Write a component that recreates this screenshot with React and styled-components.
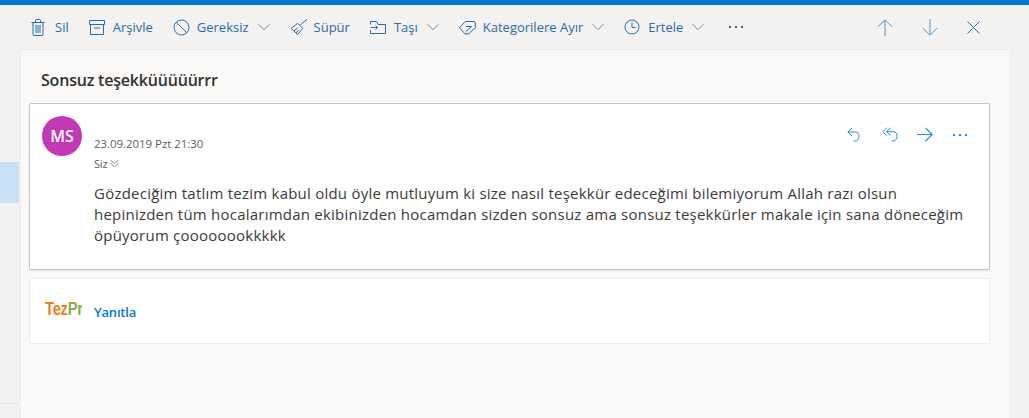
import React from 'react';
import styled, { createGlobalStyle } from 'styled-components';

const Global = createGlobalStyle`
  html, body { margin: 0; padding: 0; height: 100%; overflow: hidden; }
  body { font-family: "Open Sans", "Noto Sans", sans-serif; background: #f3f2f1; }
`;

const Page = styled.div`
  width: 1029px;
  height: 418px;
  display: flex;
  flex-direction: column;
  background: #f3f2f1;
`;

const TopStrip = styled.div`
  height: 5px;
  background: #0078d4;
  flex: none;
`;

const Toolbar = styled.div`
  height: 44px;
  flex: none;
  display: flex;
  align-items: center;
  gap: 20px;
  padding-left: 31px;
  color: #2b6ca3;
`;

const ToolItem = styled.div`
  display: flex;
  align-items: center;
  font-size: 13px;
  white-space: nowrap;
`;

const IconSlot = styled.span`
  width: 24px;
  display: flex;
  align-items: center;
`;

const ChevronSlot = styled.span`
  display: flex;
  margin-left: 9px;
`;

const MoreButton = styled.div`
  display: flex;
  margin-left: 4px;
`;

const Spacer = styled.div`
  flex: 1;
`;

const NavGroup = styled.div`
  display: flex;
  align-items: center;
  gap: 29px;
  padding-right: 49px;
`;

const Body = styled.div`
  flex: 1;
  display: flex;
`;

const LeftRail = styled.div`
  width: 19px;
  flex: none;
  border-right: 2px solid #f0efee;
  display: flex;
  flex-direction: column;
  padding-top: 113px;
`;

const SelectedRow = styled.div`
  height: 41px;
  background: #c7e0f4;
`;

const RailLine = styled.div`
  margin-top: 200px;
  height: 1px;
  background: #e6e5e3;
`;

const Pane = styled.div`
  width: 988px;
  flex: none;
  background: #faf9f8;
  border-top: 1px solid #edebe9;
  box-sizing: border-box;
  padding: 0 0 0 8px;
`;

const Subject = styled.h1`
  margin: 0;
  height: 53px;
  line-height: 60px;
  padding-left: 12px;
  font-size: 16px;
  font-weight: 600;
  color: #323130;
  letter-spacing: -0.2px;
`;

const MessageCard = styled.div`
  width: 961px;
  height: 167px;
  box-sizing: border-box;
  background: #fff;
  border: 1px solid #c8c6c4;
  border-radius: 2px;
  box-shadow: 0 1px 2px rgba(0, 0, 0, 0.08);
  display: grid;
  grid-template-columns: 52px 1fr auto;
  grid-template-rows: 70px 1fr;
  padding: 12px 0 0 12px;
`;

const Avatar = styled.div`
  width: 40px;
  height: 40px;
  border-radius: 50%;
  background: #c239b3;
  color: #fff;
  font-size: 16px;
  font-weight: 600;
  display: flex;
  align-items: center;
  justify-content: center;
`;

const Meta = styled.div`
  padding-top: 20px;
  color: #605e5c;
  font-size: 11.5px;
`;

const MetaDate = styled.div`
  height: 19px;
  line-height: 16px;
  letter-spacing: -0.05px;
`;

const Recipient = styled.div`
  display: flex;
  align-items: center;
  gap: 3px;
  height: 16px;
  font-size: 11px;
  letter-spacing: -0.2px;
`;

const Actions = styled.div`
  display: flex;
  align-items: center;
  align-self: start;
  height: 15px;
  gap: 19px;
  padding: 11px 21px 0 0;
`;

const MessageText = styled.p`
  grid-column: 2 / 4;
  margin: -3px 0 0;
  width: 872px;
  font-size: 15px;
  line-height: 21px;
  color: #3b3a39;
  letter-spacing: 0.23px;
`;

const ReplyCard = styled.div`
  width: 961px;
  height: 66px;
  margin-top: 8px;
  box-sizing: border-box;
  background: #fff;
  border: 1px solid #edebe9;
  border-radius: 2px;
  display: flex;
  align-items: center;
  padding-left: 15px;
  gap: 12px;
`;

const LogoClip = styled.div`
  width: 37px;
  height: 22px;
  margin-top: -5px;
  overflow: hidden;
`;

const LogoText = styled.div`
  width: 60px;
  white-space: nowrap;
  font-family: "Liberation Sans", sans-serif;
  font-size: 19px;
  line-height: 22px;
  font-weight: 700;
  letter-spacing: -0.4px;
  transform: scaleX(0.78);
  transform-origin: left center;
`;

const LogoPart = styled.span`
  color: ${({ $color }) => $color};
`;

const ReplyLink = styled.a`
  color: #0078d4;
  font-size: 13px;
  font-weight: 600;
  letter-spacing: -0.2px;
  margin-top: 1px;
`;

const Icon = ({ w = 16, h = 16, color = '#2b6ca3', sw = 1, children }) => (
  <svg width={w} height={h} viewBox={`0 0 ${w} ${h}`} fill="none" stroke={color} strokeWidth={sw}>
    {children}
  </svg>
);

const Chevron = () => (
  <ChevronSlot>
    <Icon w={12} h={8} color="#5f8fb8">
      <path d="M.5 1.200 6 6.700l5.500-5.500" />
    </Icon>
  </ChevronSlot>
);

const Trash = () => (
  <Icon w={14} h={17}>
    <path d="M.5 3.500h13M4.500 3.500v-2a1 1 0 0 1 1-1h3a1 1 0 0 1 1 1v2M2 3.500v12a1 1 0 0 0 1 1h8a1 1 0 0 0 1-1v-12M5 6v8M7 6v8M9 6v8" />
  </Icon>
);

const Archive = () => (
  <Icon w={16} h={15}>
    <path d="M.5.500h15v4H.5zM1.500 4.500v10h13v-10M5 8h6" />
  </Icon>
);

const Block = () => (
  <Icon w={17} h={17}>
    <circle cx="8.500" cy="8.500" r="7.500" />
    <path d="m3.200 3.200 10.600 10.600" />
  </Icon>
);

const Broom = () => (
  <Icon w={18} h={17}>
    <path d="M1 9.300 7.700 4.300l5 5L7.700 15.500z" />
    <path d="M10.300 6 17 .3M4 12l3.500-3M6 14l2.500-3" />
  </Icon>
);

const Move = () => (
  <Icon w={16} h={13}>
    <path d="M.5 3.500v-3h6l1.500 3h7.500v9H.5V9M.5 6.500h7M5.500 4.500l2 2-2 2" />
  </Icon>
);

const Tag = () => (
  <Icon w={18} h={15}>
    <path d="M.5 7.800 6.300 1.500h8.500a1.500 1.500 0 0 1 1.500 1.500v4.500L10 13.800H6z" />
    <path d="M7 6.500h5.500M6.800 11.500 12.500 6.500" />
  </Icon>
);

const Clock = () => (
  <Icon w={16} h={16}>
    <circle cx="8" cy="8" r="7" />
    <path d="M8 3.500V8.500h3.500" />
  </Icon>
);

const More = ({ color = '#2b6ca3' }) => (
  <svg width="16" height="4" viewBox="0 0 16 4" fill={color}>
    <rect x="1" y="1" width="2" height="2" />
    <rect x="7" y="1" width="2" height="2" />
    <rect x="13" y="1" width="2" height="2" />
  </svg>
);

const ArrowUp = () => (
  <Icon w={16} h={17} color="#5d93c0">
    <path d="M8 17V1M.8 8 8 .8 15.200 8" />
  </Icon>
);

const ArrowDown = () => (
  <Icon w={16} h={17} color="#5d93c0">
    <path d="M8 0v16M.8 9 8 16.200 15.200 9" />
  </Icon>
);

const Close = () => (
  <Icon w={13} h={13}>
    <path d="m.5.500 12 12M12.500.500l-12 12" />
  </Icon>
);

const Reply = () => (
  <Icon w={16} h={15} color="#2b88d8">
    <path d="M5 1 .9 5 5 9M.9 5H8a4.200 4.200 0 0 1 4 4.300A4.200 4.200 0 0 1 8 14H6.500" />
  </Icon>
);

const ReplyAll = () => (
  <Icon w={16} h={15} color="#2b88d8">
    <path d="M4.500 1 .8 4.700l3.700 3.800M8.500 1 4.500 4.700l4 3.800M4.500 4.700H11a4.200 4.200 0 0 1 4 4.300 4.200 4.200 0 0 1-4 5H9.500" />
  </Icon>
);

const Forward = () => (
  <Icon w={16} h={15} color="#2b88d8" sw={1.200}>
    <path d="M0 7.500h15M8.500 .8l6.700 6.700-6.700 6.700" />
  </Icon>
);

const DoubleChevron = () => (
  <Icon w={9} h={9} color="#8a8886">
    <path d="m.5.800 4 4 4-4M.5 4 4.500 8l4-4" />
  </Icon>
);

const App = () => (
  <Page>
    <Global />
    <TopStrip />
    <Toolbar>
      <ToolItem><IconSlot><Trash /></IconSlot>Sil</ToolItem>
      <ToolItem><IconSlot><Archive /></IconSlot>Arşivle</ToolItem>
      <ToolItem><IconSlot><Block /></IconSlot>Gereksiz<Chevron /></ToolItem>
      <ToolItem><IconSlot><Broom /></IconSlot>Süpür</ToolItem>
      <ToolItem><IconSlot><Move /></IconSlot>Taşı<Chevron /></ToolItem>
      <ToolItem><IconSlot><Tag /></IconSlot>Kategorilere Ayır<Chevron /></ToolItem>
      <ToolItem><IconSlot><Clock /></IconSlot>Ertele<Chevron /></ToolItem>
      <MoreButton><More /></MoreButton>
      <Spacer />
      <NavGroup>
        <ArrowUp />
        <ArrowDown />
        <Close />
      </NavGroup>
    </Toolbar>
    <Body>
      <LeftRail>
        <SelectedRow />
        <RailLine />
      </LeftRail>
      <Pane>
        <Subject>Sonsuz teşekküüüüürrr</Subject>
        <MessageCard>
          <Avatar>MS</Avatar>
          <Meta>
            <MetaDate>23.09.2019 Pzt 21:30</MetaDate>
            <Recipient>Siz <DoubleChevron /></Recipient>
          </Meta>
          <Actions>
            <Reply />
            <ReplyAll />
            <Forward />
            <More color="#2b88d8" />
          </Actions>
          <MessageText>
            Gözdeciğim tatlım tezim kabul oldu öyle mutluyum ki size nasıl teşekkür edeceğimi bilemiyorum Allah razı olsun hepinizden tüm hocalarımdan ekibinizden hocamdan sizden sonsuz ama sonsuz teşekkürler makale için sana döneceğim öpüyorum çoooooookkkkk
          </MessageText>
        </MessageCard>
        <ReplyCard>
          <LogoClip>
            <LogoText>
              <LogoPart $color="#e8821e">Tez</LogoPart>
              <LogoPart $color="#8ab04a">Pr</LogoPart>
            </LogoText>
          </LogoClip>
          <ReplyLink>Yanıtla</ReplyLink>
        </ReplyCard>
      </Pane>
    </Body>
  </Page>
);

export default App;
